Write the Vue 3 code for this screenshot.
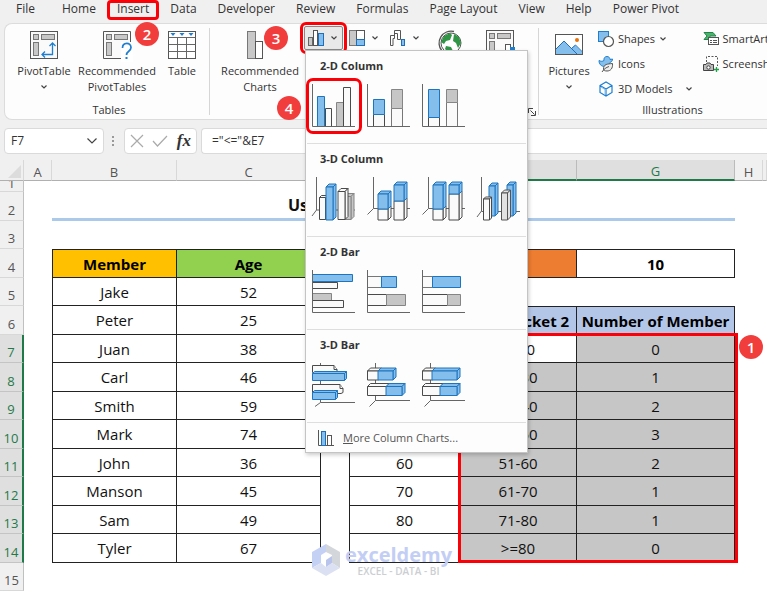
<script setup>
import { ref } from 'vue'

const tabs = ['File', 'Home', 'Insert', 'Data', 'Developer', 'Review', 'Formulas', 'Page Layout', 'View', 'Help', 'Power Pivot']
const activeTab = ref('Insert')
const nameBox = ref('F7')
const formula = ref('="<="&E7')

// Shape helpers for the chart gallery: r = flat rectangle, prism = 3-D block, l = line
const r = (x, y, w, h, c) => ({ c, d: [`M${x} ${y}h${w}v${h}h${-w}z`] })
const prism = (x, y, w, h, c, p = 3) => ({
  c,
  d: [
    `M${x} ${y}l${p} ${-p}h${w}l${-p} ${p}z`,
    `M${x + w} ${y}l${p} ${-p}v${h}l${-p} ${p}z`,
    `M${x} ${y}h${w}v${h}h${-w}z`
  ]
})
const l = (d) => ({ c: 'axis', d: [d] })
const flatAxis = l('M.5 0V42.5H43')
const colAxis = l('M6.5 0V31.5H43M6.5 31.5L.5 37.5')
const barAxis = l('M8.5 0V37.5H43M8.5 37.5L2.5 43.5')

const gallery = [
  {
    title: '2-D Column',
    items: [
      { name: 'Clustered Column', marked: true, shapes: [r(5.5, 12.5, 7, 30, 'blue'), r(13.5, 24.5, 6, 18, 'white'), r(24.5, 18.5, 7, 24, 'grey'), r(31.5, 3.5, 7, 39, 'white'), flatAxis] },
      { name: 'Stacked Column', shapes: [r(6.5, 30.5, 11, 12, 'white'), r(6.5, 15.5, 11, 15, 'blue'), r(24.5, 24.5, 11, 18, 'pale'), r(24.5, 5.5, 11, 19, 'grey'), flatAxis] },
      { name: '100% Stacked Column', shapes: [r(6.5, 33.5, 11, 9, 'white'), r(6.5, 5.5, 11, 28, 'blue'), r(24.5, 18.5, 11, 24, 'pale'), r(24.5, 5.5, 11, 13, 'grey'), flatAxis] }
    ]
  },
  {
    title: '3-D Column',
    items: [
      { name: '3-D Clustered Column', shapes: [l('M4.5 0V33L0 39M4.5 33H43'), prism(7.5, 20.5, 6, 22, 'white', 2), prism(14, 10, 7, 33, 'blue', 3), prism(33, 19.5, 6, 23, 'grey', 3), prism(26, 14.5, 7, 28, 'white', 3)] },
      { name: '3-D Stacked Column', shapes: [colAxis, prism(11, 32, 10, 11, 'white'), prism(11, 17, 10, 15, 'blue'), prism(27, 24, 10, 19, 'white'), prism(27, 8, 10, 16, 'blue')] },
      { name: '3-D 100% Stacked Column', shapes: [colAxis, prism(11, 32, 10, 11, 'white'), prism(11, 8, 10, 24, 'blue'), prism(27, 17, 10, 26, 'white'), prism(27, 8, 10, 9, 'blue')] },
      { name: '3-D Column', shapes: [l('M4.5 0V34L0 40M4.5 34.5H43'), prism(12, 9, 6, 30, 'blue'), prism(30, 8, 6, 31, 'blue'), prism(6.5, 22, 6, 21, 'white', 2), prism(24.5, 16, 6, 27, 'silver', 3)] }
    ]
  },
  {
    title: '2-D Bar',
    items: [
      { name: 'Clustered Bar', shapes: [r(0.5, 12.5, 25, 6, 'white'), r(0.5, 4.5, 40, 7, 'blue'), r(0.5, 23.5, 19, 7, 'grey'), r(0.5, 30.5, 31, 7, 'white'), flatAxis] },
      { name: 'Stacked Bar', shapes: [r(0.5, 6.5, 14, 11, 'pale'), r(14.5, 6.5, 15, 11, 'blue'), r(0.5, 24.5, 19, 11, 'white'), r(19.5, 24.5, 19, 11, 'grey'), flatAxis] },
      { name: '100% Stacked Bar', shapes: [r(0.5, 6.5, 10, 11, 'pale'), r(10.5, 6.5, 28, 11, 'blue'), r(0.5, 24.5, 25, 11, 'white'), r(25.5, 24.5, 13, 11, 'grey'), flatAxis] }
    ]
  },
  {
    title: '3-D Bar',
    items: [
      { name: '3-D Clustered Bar', shapes: [l('M8.5 0V39.5H43M8.5 39.5L3 43.5'), { c: 'white', d: ['M.5 2.5H22l3 4v3H.5z', 'M22 2.5v4h3'] }, prism(0.5, 10.5, 32, 7, 'blue', 2), { c: 'white', d: ['M.5 21.5H28l3 4v4l-2 1H.5z', 'M28 21.5v4h3'] }, prism(0.5, 29.5, 23, 7, 'blue', 2)] },
      { name: '3-D Stacked Bar', shapes: [barAxis, prism(0.5, 8, 11, 9, 'white'), prism(11, 8, 15, 9, 'blue'), prism(0.5, 23.5, 19, 9, 'white'), prism(19, 23.5, 16, 9, 'blue')] },
      { name: '3-D 100% Stacked Bar', shapes: [barAxis, prism(0.5, 8, 10, 9, 'white'), prism(10, 8, 25, 9, 'blue'), prism(0.5, 23.5, 18, 9, 'white'), prism(18, 23.5, 17, 9, 'blue')] }
    ]
  }
]

const columns = ['A', 'B', 'C', 'D', 'E', 'F', 'G', 'H', '']
const keys = ['A', 'B', 'C', 'D', 'E', 'F', 'G', 'H', 'I']
const rows = [
  { n: 3 },
  { n: 4, B: 'Member', C: 'Age', E: 'Bin Size', G: '10' },
  { n: 5, B: 'Jake', C: '52' },
  { n: 6, B: 'Peter', C: '25', E: 'Bracket 1', F: 'Age Bracket 2', G: 'Number of Member' },
  { n: 7, B: 'Juan', C: '38', E: '20', F: '<=20', G: '0' },
  { n: 8, B: 'Carl', C: '46', E: '30', F: '21-30', G: '1' },
  { n: 9, B: 'Smith', C: '59', E: '40', F: '31-40', G: '2' },
  { n: 10, B: 'Mark', C: '74', E: '50', F: '41-50', G: '3' },
  { n: 11, B: 'John', C: '36', E: '60', F: '51-60', G: '2' },
  { n: 12, B: 'Manson', C: '45', E: '70', F: '61-70', G: '1' },
  { n: 13, B: 'Sam', C: '49', E: '80', F: '71-80', G: '1' },
  { n: 14, B: 'Tyler', C: '67', E: '', F: '>=80', G: '0' },
  { n: 15 }
]

const selectedRow = (n) => n >= 7 && n <= 14
// E4 is merged with F4
const rowKeys = (row) => (row.n === 4 ? keys.filter((k) => k !== 'F') : keys)
function cellClass(row, k) {
  const boxed = row[k] !== undefined
  return {
    boxed,
    top: boxed && (row.n === 4 || (row.n === 6 && 'EFG'.includes(k))),
    left: boxed && (k === 'B' || k === 'E'),
    head: row.n === 4 || (row.n === 6 && 'EFG'.includes(k)),
    gold: row.n === 4 && k === 'B',
    green: row.n === 4 && k === 'C',
    orange: row.n === 4 && k === 'E',
    azure: row.n === 6 && 'EFG'.includes(k),
    picked: selectedRow(row.n) && 'FG'.includes(k) && !(row.n === 7 && k === 'F')
  }
}
</script>

<template>
  <div class="app">
    <svg class="defs" aria-hidden="true">
      <symbol id="chev" viewBox="0 0 8 6"><path d="M1.5 1.5L4 4l2.5-2.5" fill="none" stroke="#444" stroke-width="1.2" /></symbol>
    </svg>

    <nav class="tabs">
      <button v-for="t in tabs" :key="t" class="tab" :class="{ active: t === activeTab }" @click="activeTab = t">{{ t }}</button>
    </nav>

    <section class="ribbon">
      <div class="group tables">
        <div class="tools">
          <button class="big">
            <svg width="28" height="28" viewBox="0 0 28 28">
              <rect x=".5" y=".5" width="27" height="27" fill="#fafafa" stroke="#555" />
              <g fill="#c8c8c8" stroke="#777"><rect x="3.500" y="3.500" width="5" height="5" /><rect x="11.500" y="3.500" width="13" height="5" /><rect x="3.500" y="11.500" width="5" height="13" /></g>
              <path d="M22.500 12v11.500H12M19.500 15l3-3 3 3M15 20.500l-3 3 3 3" fill="none" stroke="#1e7fd0" stroke-width="1.300" />
            </svg>
            <span>PivotTable</span>
            <svg class="chev" width="8" height="6"><use href="#chev" /></svg>
          </button>
          <button class="big wide">
            <svg width="28" height="28" viewBox="0 0 28 28">
              <path d="M19 27.500H.5V.5h27V12" fill="#fafafa" stroke="#555" />
              <g fill="#c8c8c8" stroke="#777"><rect x="3.500" y="3.500" width="5" height="5" /><rect x="11.500" y="3.500" width="13" height="5" /><rect x="3.500" y="11.500" width="5" height="13" /></g>
              <path d="M18 11h12v20H18z" fill="#fff" />
              <path d="M20 18c0-6 8.500-6 8.500-.5 0 4-4.500 3.500-4.500 7.500" fill="none" stroke="#1e7fd0" stroke-width="1.700" transform="translate(-.5 -1)" />
              <rect x="22.500" y="26" width="2" height="2" fill="#1e7fd0" />
            </svg>
            <span>Recommended<br>PivotTables</span>
            <i class="badge b2">2</i>
          </button>
          <button class="big narrow">
            <svg width="28" height="28" viewBox="0 0 28 28">
              <rect x=".5" y=".5" width="27" height="27" fill="#fff" stroke="#555" />
              <path d="M.5 6.500h27M.5 13.500h27M.5 20.500h27M9.500 6v21M18.500 6v21" fill="none" stroke="#666" />
              <path d="M2.500 2h5L5 5zM11.500 2h5L14 5zM20.500 2h5L23 5z" fill="#1e7fd0" />
            </svg>
            <span>Table</span>
          </button>
        </div>
        <div class="caption">Tables</div>
      </div>

      <div class="group charts">
        <div class="tools">
          <button class="big wide">
            <svg width="28" height="28" viewBox="0 0 28 28">
              <rect x="1.500" y=".5" width="8" height="27" fill="#c8c8c8" stroke="#777" /><rect x="9.500" y="10.500" width="7" height="17" fill="#fff" stroke="#555" />
            </svg>
            <span>Recommended<br>Charts</span>
            <i class="badge b3">3</i><i class="badge b4">4</i>
          </button>
          <div class="drop">
            <button class="mini open" aria-label="Insert Column or Bar Chart">
              <svg width="16" height="16" viewBox="0 0 16 16"><rect x=".5" y="7.500" width="4" height="8" fill="#c8c8c8" stroke="#666" /><rect x="5.500" y=".5" width="4" height="15" fill="#fff" stroke="#555" /><rect x="10.500" y="3.500" width="5" height="12" fill="#83beec" stroke="#1e6fb8" /></svg>
              <svg width="8" height="6"><use href="#chev" /></svg>
            </button>
            <div class="menu">
              <section v-for="s in gallery" :key="s.title" class="block">
                <h3>{{ s.title }}</h3>
                <div class="choices">
                  <button v-for="it in s.items" :key="it.name" class="choice" :class="{ marked: it.marked }" :aria-label="it.name">
                    <svg width="44" height="44" viewBox="0 0 44 44">
                      <g v-for="(sh, i) in it.shapes" :key="i" :class="sh.c"><path v-for="(d, j) in sh.d" :key="j" :d="d" /></g>
                    </svg>
                  </button>
                </div>
              </section>
              <button class="more">
                <svg width="16" height="16" viewBox="0 0 16 16"><path d="M.5 0v15.500H16" fill="none" stroke="#555" /><rect x="3.500" y="1.500" width="4" height="14" fill="#83beec" stroke="#1e6fb8" /><rect x="9.500" y="5.500" width="4" height="10" fill="#fff" stroke="#555" /></svg>
                <span><u>M</u>ore Column Charts...</span>
              </button>
            </div>
          </div>
          <button class="mini" aria-label="Insert Hierarchy Chart">
            <svg width="16" height="16" viewBox="0 0 16 16"><rect x=".5" y=".5" width="7" height="15" fill="#c8c8c8" stroke="#777" /><rect x="7.500" y=".5" width="8" height="9" fill="#fff" stroke="#555" /><rect x="7.500" y="9.500" width="8" height="6" fill="#83beec" stroke="#1e6fb8" /></svg>
            <svg width="8" height="6"><use href="#chev" /></svg>
          </button>
          <button class="mini" aria-label="Insert Waterfall Chart">
            <svg width="16" height="16" viewBox="0 0 16 16"><path d="M.5 15.500v-10h4v-5h6v9h-3v-6h-3v5h-1.500v7z" fill="#fff" stroke="#555" /><rect x="11.500" y="9.500" width="3" height="6" fill="#83beec" stroke="#1e6fb8" /></svg>
            <svg width="8" height="6"><use href="#chev" /></svg>
          </button>
          <button class="map" aria-label="Maps">
            <svg width="26" height="26" viewBox="0 0 26 26">
              <path d="M5 21A12 12 0 0 1 17 1.500" fill="none" stroke="#555" stroke-width="1.300" />
              <circle cx="14" cy="13" r="10" fill="#fff" stroke="#555" />
              <path d="M7 6l6-3 2 2-2 5-4 1-2 3-3-2zM17 4l5 3 2 6-3 5-2-5-3-2zM9 16l5 1 2 4-4 2-4-4z" fill="#2f9646" />
            </svg>
          </button>
          <button class="map" aria-label="PivotChart">
            <svg width="28" height="28" viewBox="0 0 28 28">
              <rect x=".5" y=".5" width="27" height="27" fill="#fafafa" stroke="#555" />
              <g fill="#c8c8c8" stroke="#777"><rect x="3.500" y="3.500" width="5" height="5" /><rect x="11.500" y="3.500" width="13" height="5" /><rect x="3.500" y="11.500" width="5" height="13" /></g>
              <rect x="19.500" y="14.500" width="5" height="13" fill="#fff" stroke="#555" /><rect x="24" y="17" width="5" height="11" fill="#1e7fd0" />
            </svg>
          </button>
        </div>
        <button class="launcher" aria-label="Chart options"><svg width="8" height="8" viewBox="0 0 8 8"><path d="M.5 5V.5H5M2.500 2.500l4 4M7.500 3v4.500H3" fill="none" stroke="#444" /></svg></button>
      </div>

      <div class="group illus">
        <div class="tools">
          <button class="big narrow pics">
            <svg width="28" height="28" viewBox="0 0 28 28">
              <rect x=".5" y="3.500" width="27" height="20" fill="#fff" stroke="#555" />
              <path d="M1 18l8-8 13 13H1z" fill="#83beec" /><path d="M16 18l4-4 7 7v2h-6z" fill="#83beec" />
              <path d="M1 18l8-8 13 13M16.500 17.500l4-3.500 7 7" fill="none" stroke="#1e6fb8" />
              <circle cx="22" cy="9" r="2" fill="#e8720c" />
            </svg>
            <span>Pictures</span>
            <svg class="chev" width="8" height="6"><use href="#chev" /></svg>
          </button>
          <div class="list">
            <button>
              <svg width="16" height="16" viewBox="0 0 16 16"><rect x=".5" y=".5" width="10" height="10" fill="#83beec" stroke="#1e7fd0" /><circle cx="10.500" cy="10.500" r="5" fill="#fff" stroke="#555" stroke-width="1.200" /></svg>
              <span>Shapes</span><svg width="8" height="6"><use href="#chev" /></svg>
            </button>
            <button>
              <svg width="16" height="16" viewBox="0 0 16 16"><path d="M1 4.500c2 1 3.500 1 5 0C5.500 2 7 .5 9 .5s3 1.500 3 3l2.500-.5c0 3-2 3-2.500 3.500 0 2-2 4-5 4C3 10.500 1 8 1 4.500z" fill="#83beec" stroke="#1e7fd0" /><path d="M5.500 13c0-5 4-5 9-5.500.5 5-2 7.500-5.500 7.500-2 0-3.500-.5-3.500-2zM4 16c2-3 4-4.500 7-5.500" fill="#eee" stroke="#555" /></svg>
              <span>Icons</span>
            </button>
            <button>
              <svg width="16" height="16" viewBox="0 0 16 16"><path d="M2 4.500L8 1l6 3.500v7L8 15l-6-3.500zM2 4.500L8 8l6-3.500M8 8v7" fill="#fff" stroke="#1e7fd0" stroke-width="1.200" /><path d="M3 6l4 2.500V13" fill="none" stroke="#83beec" /></svg>
              <span>3D Models</span><svg class="far" width="8" height="6"><use href="#chev" /></svg>
            </button>
          </div>
          <div class="list">
            <button>
              <svg width="16" height="16" viewBox="0 0 16 16"><path d="M1 1.500h9l3 3.500H7v3.500H1l3-3.500z" fill="#4bb36b" stroke="#23844a" /><rect x="5.500" y="6.500" width="10" height="7" fill="#fff" stroke="#555" /><path d="M7 9.500h2M10 9.500h4M7 11.500h2M10 11.500h4" stroke="#555" /></svg>
              <span>SmartArt</span>
            </button>
            <button>
              <svg width="16" height="16" viewBox="0 0 16 16"><path d="M3.500 6V.5h11V10" fill="none" stroke="#555" stroke-dasharray="2 1.500" /><path d="M.5 8.500H3l1-1.500h3l1 1.500h2.500v6H.5z" fill="#bbb" stroke="#444" /><circle cx="5.500" cy="11.500" r="1.700" fill="#fff" stroke="#444" /><path d="M13.500 11v5M11 13.500h5" stroke="#23a04a" stroke-width="1.300" /></svg>
              <span>Screenshot</span>
            </button>
          </div>
        </div>
        <div class="caption">Illustrations</div>
      </div>
    </section>

    <section class="bar">
      <div class="field name">
        <input v-model="nameBox" aria-label="Name Box">
        <button aria-label="Open name list"><svg width="12" height="8" viewBox="0 0 12 8"><path d="M1.500 1.500L6 6l4.500-4.500" fill="none" stroke="#444" stroke-width="1.200" /></svg></button>
      </div>
      <svg class="dots" width="4" height="12" viewBox="0 0 4 12"><path d="M1 1h2v2H1zM1 5h2v2H1zM1 9h2v2H1z" fill="#999" /></svg>
      <div class="field edit">
        <button aria-label="Cancel"><svg width="14" height="14" viewBox="0 0 14 14"><path d="M1 1l12 12M13 1L1 13" fill="none" stroke="#aaa" stroke-width="1.200" /></svg></button>
        <button aria-label="Enter"><svg width="16" height="12" viewBox="0 0 16 12"><path d="M1 6l4.500 5L15 1" fill="none" stroke="#aaa" stroke-width="1.200" /></svg></button>
        <button class="fx" aria-label="Insert Function">fx</button>
      </div>
      <div class="field formula"><input v-model="formula" aria-label="Formula Bar"></div>
    </section>

    <main class="sheet">
      <table>
        <colgroup><col class="w24"><col class="w28"><col class="wb"><col class="wc"><col class="w28"><col class="we"><col class="wf"><col class="wg"><col class="w28"><col></colgroup>
        <thead>
          <tr>
            <th class="corner"><svg width="13" height="13" viewBox="0 0 13 13"><path d="M13 0v13H0z" fill="#dcdcdc" /></svg></th>
            <th v-for="(c, i) in columns" :key="i" :class="{ on: c === 'F' || c === 'G' }">{{ c }}</th>
          </tr>
        </thead>
        <tbody>
          <tr class="cut"><th><div>1</div></th><td colspan="9"></td></tr>
          <tr><th>2</th><td></td><td class="title" colspan="6">Using COUNTIFS Functions</td><td colspan="2"></td></tr>
          <tr v-for="row in rows" :key="row.n">
            <th :class="{ on: selectedRow(row.n) }">{{ row.n }}</th>
            <td v-for="k in rowKeys(row)" :key="k" :colspan="row.n === 4 && k === 'E' ? 2 : 1" :class="cellClass(row, k)">{{ row[k] }}</td>
          </tr>
        </tbody>
      </table>
      <div class="selection"><i class="badge b1">1</i></div>
      <div class="brand">
        <svg width="28" height="32" viewBox="0 0 28 32">
          <path d="M14 0L0 8v16l9-5v-8l5-3z" fill="#c5d0f5" /><path d="M14 0l14 8v16l-8-5v-8l-6-3z" fill="#d3d6da" /><path d="M0 24l14 8 14-8-8-5-6 4-5-4z" fill="#dbe1f2" /><path d="M14 23v-7l6-4v7z" fill="#b9c4ec" />
        </svg>
        <div><b>exceldemy</b><small>EXCEL - DATA - BI</small></div>
      </div>
    </main>
  </div>
</template>

<style>
html, body { margin: 0; background: #fff; overflow: hidden; }
</style>

<style scoped>
.app { position: relative; min-height: 100vh; overflow: hidden; background: #f0f0f0; font: 11px/16px "Open Sans", "Noto Sans", sans-serif; color: #333; }
.app * { box-sizing: border-box; }
button, input { font: inherit; color: inherit; border: 0; background: none; padding: 0; margin: 0; }
svg { display: block; flex: none; overflow: visible; }
.defs { position: absolute; width: 0; height: 0; }

.tabs { display: flex; gap: 1px; height: 23px; padding-left: 6px; }
.tab { height: 20px; padding: 0 10px 3px; font-size: 12px; border-radius: 4px; white-space: nowrap; }
.tab:first-child { margin-right: 6px; }
.tab.active { box-shadow: inset 0 0 0 3px #fb0007; }

.ribbon { position: relative; z-index: 2; display: flex; height: 97px; margin-left: 4px; background: #fdfdfd; border: 1px solid #dcdcdc; border-right: 0; border-radius: 8px 0 0 8px; }
.group { position: relative; display: flex; flex-direction: column; justify-content: space-between; }
.group::after { content: ""; position: absolute; right: 0; top: 4px; bottom: 4px; width: 1px; background: #d6d6d6; }
.illus::after { display: none; }
.tools { display: flex; align-items: flex-start; }
.caption { text-align: center; line-height: 18px; }
.tables { padding: 0 6px 0 9px; }
.charts { padding: 0 12px 0 7px; }
.illus { padding-left: 8px; flex: 1; }
.illus .caption { width: 251px; }
.big { position: relative; display: flex; flex-direction: column; align-items: center; width: 60px; padding-top: 7px; }
.big span { margin-top: 4px; text-align: center; }
.big.wide { width: 86px; }
.big.narrow { width: 44px; }
.chev { margin-top: 5px; }
.drop { position: relative; margin-left: 1px; }
.mini { display: flex; align-items: center; gap: 6px; width: 41px; height: 24px; margin-top: 2px; padding-left: 4px; }
.mini.open { background: #e9e9e9; border: 1px solid #888; border-radius: 2px; outline: 3px solid #fb0007; outline-offset: 1px; width: 39px; margin-right: 2px; padding-left: 3px; }
.map { padding: 6px 13px 0 10px; }
.launcher { position: absolute; right: 3px; bottom: 3px; }
.list { display: flex; flex-direction: column; padding-top: 2px; }
.list button { display: flex; align-items: center; gap: 4px; height: 25px; }
.list + .list { margin-left: 10px; }
.pics { margin-right: 7px; }
.far { margin-left: 8px; }

.menu { position: absolute; z-index: 3; left: 1px; top: 26px; width: 223px; padding: 0 1px; background: #fdfdfd; border: 1px solid #c4c4c4; box-shadow: 1px 2px 4px #0003; }
.block { height: 93px; border-bottom: 1px solid #dedede; padding: 6px 0 0 5px; }
.block h3 { margin: 0 0 10px 8px; font-size: 11px; line-height: 17px; font-weight: 700; color: #333; }
.choices { display: flex; gap: 11px; }
.choice { border-radius: 1px; }
.choice.marked { outline: 3px solid #fb0007; outline-offset: 3px; }
.more { display: flex; align-items: center; gap: 9px; width: 100%; height: 29px; padding-left: 11px; color: #555; }
.axis { fill: none; stroke: #666; }
.blue { fill: #83beec; stroke: #1e74bd; }
.white { fill: #fafafa; stroke: #4a4a4a; }
.pale { fill: #fafafa; stroke: #777; }
.grey { fill: #c6c6c6; stroke: #858585; }
.silver { fill: #e2e2e2; stroke: #555; }

.badge { position: absolute; z-index: 5; width: 24px; height: 24px; border-radius: 50%; background: #f23d3d; color: #fff; font: 600 15px/24px "Open Sans", sans-serif; text-align: center; }
.b2 { left: 61px; top: -2px; }
.b3 { left: 47px; top: 2px; }
.b4 { left: 60px; top: 72px; }
.b1 { right: -28px; top: -1px; }

.bar { display: flex; align-items: center; height: 40px; padding: 2px 0 0 4px; }
.field { display: flex; align-items: center; height: 26px; background: #fff; border: 1px solid #dadada; border-radius: 4px; font-size: 12px; }
.name { width: 100px; padding: 0 5px 0 6px; }
.name input { flex: 1; min-width: 0; }
.dots { margin: 0 9px 0 7px; }
.edit { width: 73px; padding: 0 5px; justify-content: space-between; }
.fx { font: italic 700 17px/20px "Liberation Serif", serif; }
.formula { flex: 1; margin-left: 4px; padding-left: 10px; border-right: 0; border-radius: 4px 0 0 4px; }
.formula input { width: 100%; }

.sheet { position: relative; background: #fff; }
table { width: 100%; table-layout: fixed; border-spacing: 0; font: 15px/20px "Open Sans", "Noto Sans", sans-serif; color: #111; }
.w24 { width: 24px; } .w28 { width: 28px; } .wb { width: 125px; } .wc { width: 144px; }
.we { width: 111px; } .wf { width: 117px; } .wg { width: 158px; }
td, th { height: 28px; padding: 0; text-align: center; white-space: nowrap; }
tbody tr:nth-child(even) > * { height: 29px; }
th { font-weight: 400; font-size: 13px; color: #555; background: #f0f0f0; }
thead th { height: 21px; line-height: 16px; padding-top: 3px; border-bottom: 1px solid #b0b0b0; border-right: 1px solid #d8d8d8; }
.corner svg { margin-left: 8px; }
tbody th { vertical-align: bottom; border-bottom: 1px solid #d8d8d8; border-right: 1px solid #c0c0c0; }
th.on { background: #dfdfdf; color: #1f7a4a; }
thead th.on { border-bottom: 2px solid #1f7a4a; border-right-color: #bbb; }
tbody th.on { border-right: 2px solid #1f7a4a; border-bottom-color: #c4c4c4; }
tbody .cut > * { height: 11px; }
.cut div { display: flex; align-items: flex-end; justify-content: center; height: 10px; line-height: 16px; overflow: hidden; }
.title { font-weight: 700; font-size: 16px; border-bottom: 3px solid #abc9e8; }
.boxed { border-right: 1px solid #222; border-bottom: 1px solid #222; }
.top { border-top: 1px solid #222; }
.left { border-left: 1px solid #222; }
.head { font-weight: 700; color: #000; }
.gold { background: #ffc000; }
.green { background: #92d050; }
.orange { background: #ed7d31; }
.azure { background: #b4c6e7; }
.picked { background: #c6c6c6; }
.selection { position: absolute; left: 458px; top: 173px; width: 280px; height: 230px; border: 3px solid #fb0007; }
.brand { position: absolute; left: 312px; top: 384px; display: flex; gap: 5px; font-family: "Open Sans", sans-serif; }
.brand b { display: block; font-size: 20px; line-height: 22px; color: #c3cef5; }
.brand small { display: block; font-size: 10px; line-height: 10px; font-weight: 600; text-align: center; color: #cbced2; }
</style>
